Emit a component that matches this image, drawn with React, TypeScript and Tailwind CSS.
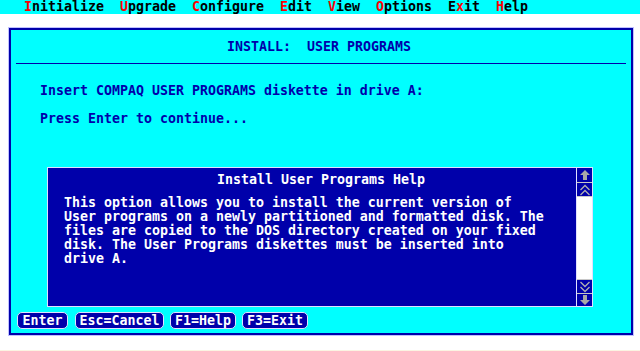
import React from "react";

const Up = () => (
  <svg width="12" height="12" viewBox="0 0 12 12">
    <path d="M6 1 L11 6 H8 V11 H4 V6 H1 Z" fill="#a8a8a8" />
  </svg>
);
const Down = () => (
  <svg width="12" height="12" viewBox="0 0 12 12">
    <path d="M6 11 L11 6 H8 V1 H4 V6 H1 Z" fill="#a8a8a8" />
  </svg>
);
const DblUp = () => (
  <svg width="12" height="12" viewBox="0 0 12 12">
    <path d="M1.5 6 L6 1.5 L10.5 6 M1.5 11 L6 6.5 L10.5 11" fill="none" stroke="#b0b0b0" strokeWidth="1.3" />
  </svg>
);
const DblDown = () => (
  <svg width="12" height="12" viewBox="0 0 12 12">
    <path d="M1.5 1 L6 5.5 L10.5 1 M1.5 6 L6 10.5 L10.5 6" fill="none" stroke="#b0b0b0" strokeWidth="1.3" />
  </svg>
);

const R = ({ c }: { c: string }) => <span className="text-[#ff0000]">{c}</span>;

const help = [
  "This option allows you to install the current version of",
  "User programs on a newly partitioned and formatted disk. The",
  "files are copied to the DOS directory created on your fixed",
  "disk. The User Programs diskettes must be inserted into",
  "drive A.",
];

export default function App() {
  return (
    <div className="w-[640px] h-[351px] bg-white flex flex-col overflow-hidden font-[family-name:'DejaVu_Sans_Mono',monospace] font-bold text-[13.29px] leading-[14px] whitespace-pre">
      <div className="h-[14px] bg-[#00ffff] flex items-center gap-[16px] pl-[24px] text-black">
        <span><R c="I" />nitialize</span>
        <span><R c="U" />pgrade</span>
        <span><R c="C" />onfigure</span>
        <span><R c="E" />dit</span>
        <span><R c="V" />iew</span>
        <span><R c="O" />ptions</span>
        <span>E<R c="x" />it</span>
        <span><R c="H" />elp</span>
      </div>
      <div className="mt-[13px] ml-[8px] w-[626px] h-[309px] border border-[#c0c0ff] flex">
        <div className="flex-1 border-2 border-[#0000aa] bg-[#00ffff] flex flex-col text-[#0000aa]">
          <div className="mt-[10px] h-[14px] text-center pr-[4px]">INSTALL:  USER PROGRAMS</div>
          <div className="mt-[9px] h-[1px] bg-[#0000aa] mx-[5px]" />
          <div className="mt-[20px] pl-[29px] h-[14px]">Insert COMPAQ USER PROGRAMS diskette in drive A:</div>
          <div className="mt-[14px] pl-[29px] h-[14px]">Press Enter to continue...</div>
          <div className="mt-[41px] ml-[36px] w-[546px] h-[140px] border border-[#e0e0ff] bg-[#0000aa] flex text-white">
            <div className="flex-1 flex flex-col">
              <div className="pt-[5px] pl-[18px] text-center h-[19px]">Install User Programs Help</div>
              <div className="mt-[9px] pl-[16px] flex flex-col">
                {help.map((l, i) => (
                  <div key={i} className="h-[14px]">{l}</div>
                ))}
              </div>
            </div>
            <div className="w-[16px] border-l border-[#e0e0ff] flex flex-col">
              <div className="h-[15px] border-b border-[#c8c8c8] flex items-center justify-center"><Up /></div>
              <div className="h-[14px] border-b border-[#c8c8c8] flex items-center justify-center"><DblUp /></div>
              <div className="flex-1 bg-white" />
              <div className="h-[14px] border-t border-[#c8c8c8] flex items-center justify-center"><DblDown /></div>
              <div className="h-[13px] border-t border-[#c8c8c8] flex items-center justify-center"><Down /></div>
            </div>
          </div>
          <div className="mt-[5px] ml-[6px] flex h-[17px]">
            <div className="w-[51px] rounded-[5px] border border-[#e0e0ff] bg-[#0000aa] text-white text-center leading-[15px]">Enter</div>
            <div className="ml-[7px] w-[89px] rounded-[5px] border border-[#e0e0ff] bg-[#0000aa] text-white text-center leading-[15px]">Esc=Cancel</div>
            <div className="ml-[6px] w-[66px] rounded-[5px] border border-[#e0e0ff] bg-[#0000aa] text-white text-center leading-[15px]">F1=Help</div>
            <div className="ml-[6px] w-[66px] rounded-[5px] border border-[#e0e0ff] bg-[#0000aa] text-white text-center leading-[15px]">F3=Exit</div>
          </div>
        </div>
      </div>
      <div className="mt-[14px] h-[1px] bg-[#fbf4e2]" />
    </div>
  );
}
